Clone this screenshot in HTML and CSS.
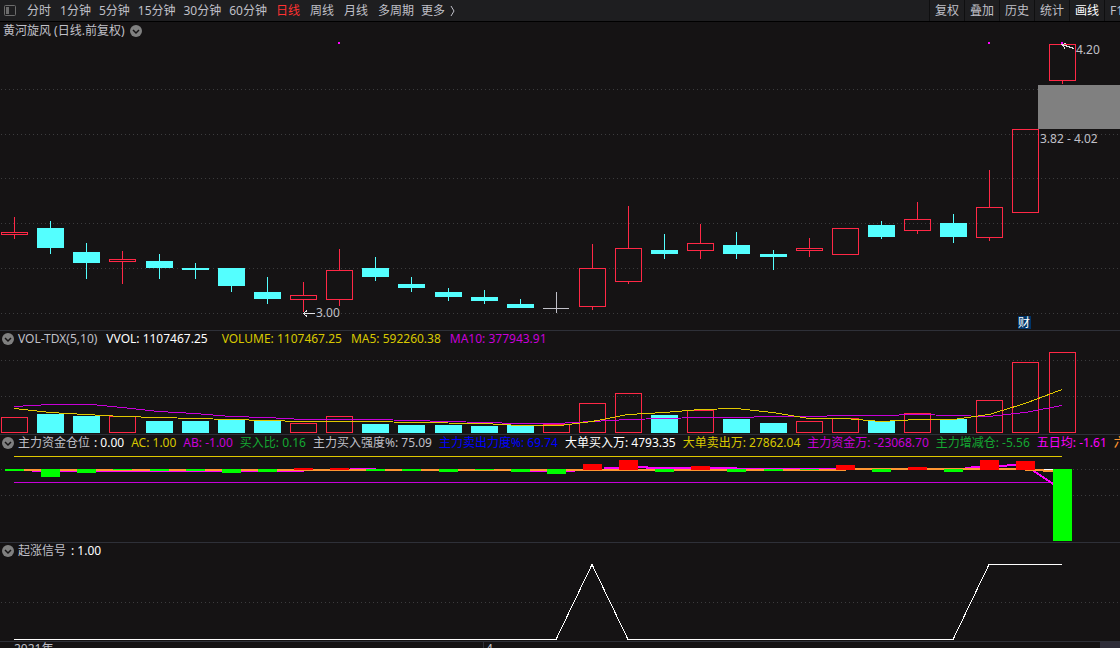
FILE: index.html
```html
<!DOCTYPE html>
<html lang="zh-CN">
<head>
<meta charset="utf-8">
<title>黄河旋风 日线</title>
<link rel="stylesheet" href="styles.css">
</head>
<body>
<div class="app">
  <header class="toolbar">
    <button class="layout-btn" aria-label="布局">
      <svg class="layout-icon" viewBox="0 0 12 11"><rect class="frame" x="0.5" y="0.5" width="11" height="10" rx="1"/><rect class="pane" x="2" y="2" width="3" height="7"/></svg>
    </button>
    <nav class="periods">
      <div class="period-group"><button class="period">分时</button></div>
      <div class="period-group minutes">
        <button class="period">1分钟</button><button class="period">5分钟</button><button class="period">15分钟</button><button class="period">30分钟</button><button class="period">60分钟</button>
      </div>
      <div class="period-group">
        <button class="period active">日线</button><button class="period">周线</button><button class="period">月线</button><button class="period">多周期</button>
      </div>
      <div class="period-group"><button class="period more">更多<svg class="more-icon" viewBox="0 0 5 12"><path d="M1 1L4 6L1 11"/></svg></button></div>
    </nav>
    <div class="tools">
      <button class="tool">复权</button><button class="tool">叠加</button><button class="tool">历史</button><button class="tool">统计</button><button class="tool active">画线</button><button class="tool last">F10</button>
    </div>
  </header>

  <main>
    <section class="panel price">
      <div class="legend title"><span>黄河旋风 (日线.前复权)</span>
        <button class="toggle" aria-label="展开"><svg viewBox="0 0 12 12"><circle cx="6" cy="6" r="6"/><path d="M3 5L6 8L9 5"/></svg></button>
      </div>
      <svg class="chart" id="price" viewBox="0 40 1120 290">
        <path class="grid" d="M1 89.5H1120M1 134.5H1120M1 178.5H1120M1 223.5H1120M1 268.5H1120M1 313.5H1120"/>
        <g id="candles"></g>
        <rect class="band" x="1038" y="85" width="82" height="44"/>
        <path class="arrow" d="M1074 48.5L1062 44.5M1066 43.5L1062 44.5L1065 48.5"/>
        <path class="arrow" d="M315 313.5H303M307 310.5L303.5 313.5L307 316.5"/>
        <path class="dot" d="M338 42h2v2h-2zM988 42h2v2h-2zM1061 42h2v2h-2z"/>
        <text class="label" x="1076" y="54">4.20</text>
        <text class="label" x="316" y="317">3.00</text>
        <text class="label" x="1040" y="143">3.82 - 4.02</text>
        <rect class="mark" x="1018" y="316" width="13" height="13"/>
        <text class="mark-text" x="1018" y="327">财</text>
      </svg>
    </section>

    <section class="panel">
      <div class="legend volume">
        <button class="toggle" aria-label="展开"><svg viewBox="0 0 12 12"><circle cx="6" cy="6" r="6"/><path d="M3 5L6 8L9 5"/></svg></button>
        <span>VOL-TDX(5,10)</span><span class="white">VVOL: 1107467.25</span><span class="yellow spaced">VOLUME: 1107467.25</span><span class="yellow">MA5: 592260.38</span><span class="purple">MA10: 377943.91</span>
      </div>
      <svg class="chart" viewBox="0 347 1120 87">
        <path class="grid" d="M1 360.5H1120M1 396.5H1120"/>
        <g id="volumes"></g>
        <polyline class="line purple-line" points="14,406.5 50,404.5 92,404.5 122,407.5 159,411.5 195,413.5 231,416.5 267,417.5 303,419.5 375,419.5 411,420.5 448,421.5 484,422.5 520,423.5 556,423.5 592,421.5 628,419.5 664,418.5 700,417.5 736,417.5 773,416.5 809,416.5 845,415.5 881,415.5 917,414.5 953,415.5 989,416.5 1025,412.5 1062,405.5"/>
        <polyline class="line yellow-line" points="14,408.5 50,412.5 86,414.5 122,416.5 159,417.5 195,418.5 231,419.5 267,420.5 303,421.5 375,421.5 411,422.5 484,423.5 520,425.5 560,425.5 592,421.5 628,414.5 664,412.5 700,409.5 736,408.5 773,412.5 809,418.5 845,418.5 881,421.5 917,419.5 953,419.5 989,414.5 1025,403.5 1062,389.5"/>
      </svg>
    </section>

    <section class="panel">
      <div class="legend fund">
        <button class="toggle" aria-label="展开"><svg viewBox="0 0 12 12"><circle cx="6" cy="6" r="6"/><path d="M3 5L6 8L9 5"/></svg></button>
        <span class="pair"><span>主力资金仓位</span><span class="white">: 0.00</span></span><span class="yellow">AC: 1.00</span><span class="purple">AB: -1.00</span><span class="green">买入比: 0.16</span><span>主力买入强度%: 75.09</span><span class="blue">主力卖出力度%: 69.74</span><span class="white">大单买入万: 4793.35</span><span class="yellow">大单卖出万: 27862.04</span><span class="purple">主力资金万: -23068.70</span><span class="green">主力增减仓: -5.56</span><span class="magenta">五日均: -1.61</span><span class="orange">六</span>
      </div>
      <svg class="chart" viewBox="0 451 1120 91">
        <path class="grid" d="M1 469.5H1120M1 495.5H1120"/>
        <path class="line yellow-line" d="M14 456.5H1062"/>
        <path class="line purple-line" d="M14 482.5H1053"/>
        <path class="line average" d="M32 471H304M350 468.5H376M530 471H575M604 468H617L628 467H647V468H737M725 468.5H836M850 468.5H908M965 468L989 466L1025 465L1062 490"/>
        <path class="line orange-line" d="M5 470H846M840 469H1030M1025 470H1053"/>
        <path class="line orange-line" d="M1043 471H1053"/>
        <path class="line white-line" d="M1044 469.5H1053"/>
        <g id="funds"></g>
      </svg>
    </section>

    <section class="panel">
      <div class="legend">
        <button class="toggle" aria-label="展开"><svg viewBox="0 0 12 12"><circle cx="6" cy="6" r="6"/><path d="M3 5L6 8L9 5"/></svg></button>
        <span>起涨信号</span><span class="white">: 1.00</span>
      </div>
      <svg class="chart" viewBox="0 559 1120 82">
        <path class="grid" d="M1 602.5H1120"/>
        <polyline class="line white-line" points="14,639.5 556,639.5 592,564.5 628,639.5 953,639.5 989,564.5 1062,564.5"/>
      </svg>
    </section>
  </main>

  <footer class="axis">
    <span class="tick first">2021年</span><span class="tick month">4</span><span class="corner"></span>
  </footer>
</div>
<script src="charts.js"></script>
</body>
</html>
```
FILE: styles.css
```css
* { box-sizing: border-box; }
body {
  margin: 0;
  background: #151314;
  color: #c0c0c8;
  font: 12px/16px "Noto Sans", "Noto Sans CJK SC", sans-serif;
  overflow: hidden;
}
button {
  margin: 0;
  padding: 0;
  border: 0;
  background: none;
  color: inherit;
  font: inherit;
  white-space: nowrap;
}
.app {
  display: flex;
  flex-direction: column;
  height: 100vh;
  overflow: hidden;
}
.toolbar {
  display: flex;
  flex: none;
  height: 22px;
  background: #1e1e20;
  border-bottom: 1px solid #000;
}
.layout-btn {
  display: flex;
  align-items: center;
  padding: 0 6px 0 4px;
}
.layout-icon { width: 12px; height: 11px; }
.layout-icon .frame { fill: none; stroke: #6c6c6c; }
.layout-icon .pane { fill: #6c6c6c; }
.periods { display: flex; }
.period-group { display: flex; }
.period { padding: 0 5px; }
.minutes .period { padding: 0 4px; }
.period.active { color: #ff3232; }
.period.more { display: flex; align-items: center; gap: 5px; padding: 0 2px; }
.more-icon { width: 5px; height: 12px; fill: none; stroke: #c0c0c8; }
.tools {
  display: flex;
  margin-left: auto;
  max-width: 191px;
  overflow: hidden;
}
.tool {
  flex: none;
  padding: 0 5px;
  border-left: 1px solid #0f0f10;
}
.tool.active { color: #fff; }

.panel { border-top: 1px solid #2e3038; }
.panel.price { border-top: 0; }
.legend {
  display: flex;
  align-items: center;
  gap: 5px;
  height: 16px;
  padding-left: 2px;
  overflow: hidden;
  white-space: nowrap;
}
.legend span { flex: none; }
.legend .toggle { margin-right: -1px; }
.legend.title { height: 18px; padding-left: 3px; }
.legend.volume { gap: 9px; }
.legend.volume .toggle { margin-right: -5px; }
.legend.fund { gap: 7px; }
.legend.fund .toggle { margin-right: -3px; }
.pair { display: flex; gap: 4px; }
.toggle { display: flex; flex: none; }
.toggle svg { width: 12px; height: 12px; }
.toggle circle { fill: #808080; }
.toggle path { fill: none; stroke: #151314; stroke-width: 1.5; }
.legend .spaced { margin-left: 5px; }
.white { color: #fff; }
.yellow { color: #d8c800; }
.purple { color: #c800d8; }
.green { color: #14a832; }
.blue { color: #0000ff; }
.magenta { color: #ff00ff; }
.orange { color: #ff9632; }

.chart {
  display: block;
  width: 100%;
  height: auto;
  shape-rendering: crispEdges;
}
.grid { fill: none; stroke: #3c3c3e; stroke-dasharray: 1 3; }
.up { fill: none; stroke: #ff2846; }
.down { fill: #54ffff; }
.flat { fill: #c0c0c8; }
.up-wick { fill: #ff2846; }
.inflow { fill: #ff0000; }
.outflow { fill: #00ff00; }
.band { fill: #808080; }
.dot { fill: #ff00ff; }
.arrow { fill: none; stroke: #e0e0e4; }
.label { fill: #c0c0c8; font-size: 12px; }
.mark { fill: #003468; }
.mark-text { fill: #fff; font-size: 12px; }
.line { fill: none; }
.yellow-line { stroke: #e0c800; }
.purple-line { stroke: #c800d8; }
.white-line { stroke: #fff; }
.orange-line { stroke: #ff9632; stroke-width: 2; }
.average { stroke: #ff00ff; stroke-width: 2; }

.axis {
  display: flex;
  flex: none;
  border-top: 1px solid #2e3038;
  line-height: 14px;
}
.first { flex: 0 0 483px; padding-left: 14px; }
.month { border-left: 1px solid #2e3038; padding-left: 2px; }
.corner { width: 20px; margin-left: auto; background: #2e2d38; }
```
FILE: charts.js
```js
const NS = "http://www.w3.org/2000/svg";

function rect(parent, cls, x, y, w, h) {
  const el = document.createElementNS(NS, "rect");
  el.setAttribute("class", cls);
  el.setAttribute("x", x);
  el.setAttribute("y", y);
  el.setAttribute("width", w);
  el.setAttribute("height", h);
  parent.appendChild(el);
}

// left edge, kind, body top, body bottom, high, low, volume top, fund bar top, fund bar bottom
const days = [
  [1, "up", 232, 235, 217, 239, 417, 469, 471],
  [37, "down", 228, 248, 221, 254, 414, 469, 477],
  [73, "down", 252, 263, 243, 279, 416, 469, 473],
  [109, "up", 259, 262, 251, 284, 416, 469, 470],
  [146, "down", 261, 268, 254, 279, 421, 469, 471],
  [182, "down", 268, 270, 263, 279, 421, 469, 471],
  [218, "down", 268, 286, 268, 292, 420, 469, 473],
  [254, "down", 292, 299, 277, 304, 421, 469, 472],
  [290, "up", 295, 300, 282, 312, 423, 468, 470],
  [326, "up", 270, 300, 249, 306, 416, 468, 470],
  [362, "down", 268, 277, 257, 281, 424, 469, 471],
  [398, "down", 284, 288, 277, 292, 425, 469, 471],
  [435, "down", 292, 297, 288, 301, 425, 469, 472],
  [471, "down", 297, 301, 290, 304, 426, 469, 470],
  [507, "down", 304, 308, 299, 308, 425, 469, 472],
  [543, "flat", 308, 309, 292, 313, 424, 469, 474],
  [579, "up", 268, 307, 244, 310, 403, 464, 470],
  [615, "up", 248, 282, 206, 284, 393, 460, 470],
  [651, "down", 250, 254, 234, 259, 415, 469, 472],
  [687, "up", 243, 251, 224, 259, 410, 466, 470],
  [723, "down", 245, 254, 232, 259, 419, 469, 472],
  [760, "down", 254, 257, 250, 270, 423, 469, 471],
  [796, "up", 248, 251, 238, 257, 421, 469, 470],
  [832, "up", 228, 255, 228, 255, 418, 465, 470],
  [868, "down", 225, 237, 221, 239, 421, 469, 472],
  [904, "up", 219, 231, 202, 234, 413, 467, 470],
  [940, "down", 223, 237, 214, 243, 419, 469, 472],
  [976, "up", 207, 238, 170, 241, 400, 460, 470],
  [1012, "up", 129, 213, 129, 213, 362, 461, 470],
  [1049, "up", 44, 81, 44, 84, 352, 469, 541]
];

const candles = document.getElementById("candles");
const volumes = document.getElementById("volumes");
const funds = document.getElementById("funds");

function box(parent, kind, x, top, bottom) {
  if (kind === "up") rect(parent, "up", x + 0.5, top + 0.5, 26, bottom - top - 1);
  else rect(parent, kind, x, top, kind === "flat" ? 26 : 27, bottom - top);
}

days.forEach(([x, kind, top, bottom, high, low, vol, fundTop, fundBottom]) => {
  const wick = kind === "up" ? "up-wick" : kind;
  box(candles, kind, x, top, bottom);
  if (high < top) rect(candles, wick, x + 13, high, 1, top - high);
  if (low > bottom) rect(candles, wick, x + 13, bottom, 1, low - bottom);
  box(volumes, kind === "flat" ? "up" : kind, x, vol, 433);
  rect(funds, fundTop < 469 ? "inflow" : "outflow", x + 4, fundTop, 19, fundBottom - fundTop);
});
```
